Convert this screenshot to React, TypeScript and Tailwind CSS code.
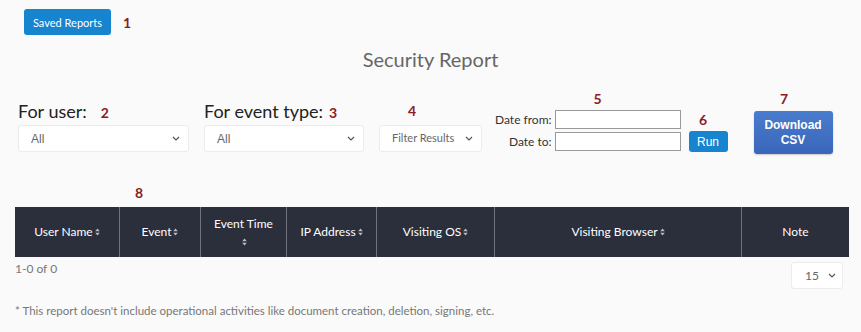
import React from 'react';

const Sort = () => (
  <svg width="5" height="8" viewBox="0 0 5 8" className="inline-block ml-[2px]">
    <path d="M2.5 0.5 L4.8 3.3 H0.2 Z" fill="#b9bcc4" />
    <path d="M2.5 7.5 L4.8 4.7 H0.2 Z" fill="#b9bcc4" />
  </svg>
);

const Chevron = () => (
  <svg width="8" height="5" viewBox="0 0 8 5" fill="none">
    <path d="M1 1 L4 4 L7 1" stroke="#555" strokeWidth="1.2" />
  </svg>
);

const Mark: React.FC<{ n: string; className?: string }> = ({ n, className }) => (
  <span className={`text-[14px] font-bold text-[#8a1c24] ${className ?? ''}`}>{n}</span>
);

const Select: React.FC<{ label: string; className?: string; lato?: boolean }> = ({ label, className, lato }) => (
  <div
    className={`h-[27px] bg-white border border-[#ececec] rounded-[3px] flex items-center justify-between pl-[12px] pr-[8px] text-[#666] ${
      lato ? "font-['Lato'] text-[11px]" : "font-['Liberation_Sans'] text-[12px]"
    } ${className ?? ''}`}
  >
    <span>{label}</span>
    <Chevron />
  </div>
);

const columns = [
  { name: 'User Name', w: 'w-[104px]', sort: true },
  { name: 'Event', w: 'w-[81px]', sort: true },
  { name: 'Event Time', w: 'w-[86px]', sort: true, wrap: true },
  { name: 'IP Address', w: 'w-[90px]', sort: true },
  { name: 'Visiting OS', w: 'w-[118px]', sort: true },
  { name: 'Visiting Browser', w: 'w-[247px]', sort: true },
  { name: 'Note', w: 'w-[108px]', sort: false },
];

export default function App() {
  return (
    <div className="w-[861px] h-[332px] overflow-hidden bg-[#fafafa] font-['Lato',sans-serif] text-[#333]">
      {/* Top */}
      <div className="pt-[9px] pl-[24px] flex items-center">
        <button className="w-[87px] h-[26px] rounded-[3px] bg-[#1784d0] text-white text-[11px] leading-none">
          Saved Reports
        </button>
        <Mark n="1" className="ml-[12px] mt-[1px]" />
      </div>

      <h1 className="mt-[12px] text-center text-[20px] leading-[24px] text-[#666]">Security Report</h1>

      {/* Filters */}
      <div className="mt-[17px] pl-[18px] flex items-end">
        <div className="w-[171px]">
          <div className="flex items-center h-[22px] mb-[3px]">
            <span className="text-[18px] text-[#222]">For user:</span>
            <Mark n="2" className="ml-[14px] mt-[2px]" />
          </div>
          <Select label="All" />
        </div>
        <div className="w-[160px] ml-[15px]">
          <div className="flex items-center h-[22px] mb-[3px]">
            <span className="text-[18px] text-[#222]">For event type:</span>
            <Mark n="3" className="ml-[6px] mt-[2px]" />
          </div>
          <Select label="All" />
        </div>
        <div className="w-[103px] ml-[15px] flex flex-col">
          <Mark n="4" className="mb-[4px] ml-[29px]" />
          <Select label="Filter Results" lato className="w-full" />
        </div>
        <div className="ml-[13px] flex flex-col items-end mb-[1px]">
          <Mark n="5" className="mr-[79px] mb-[3px] leading-[16px]" />
          <div className="flex flex-col gap-[3px]">
            {['Date from:', 'Date to:'].map((l) => (
              <div key={l} className="flex items-center justify-end">
                <span className="text-[12px] text-[#333] mr-[3px]">{l}</span>
                <div className="w-[126px] h-[19px] bg-white border border-[#9a9a9a]" />
              </div>
            ))}
          </div>
        </div>
        <div className="ml-[8px] flex flex-col items-center">
          <Mark n="6" className="mb-[1px] mr-[10px]" />
          <button className="w-[39px] h-[21px] rounded-[3px] bg-[#1784d0] text-white text-[12px] font-['Liberation_Sans']">
            Run
          </button>
        </div>
        <div className="ml-[26px] flex flex-col items-center">
          <Mark n="7" className="mb-[2px] mr-[18px]" />
          <button className="w-[79px] h-[43px] rounded-[3px] bg-gradient-to-b from-[#4a7ccd] to-[#3a66b9] text-white text-[12px] leading-[15px] font-bold font-['Liberation_Sans'] shadow-[0_1px_2px_rgba(0,0,0,0.2)] mb-[-2px]">
            Download
            <br />
            CSV
          </button>
        </div>
      </div>

      {/* Table */}
      <div className="mt-[30px] pl-[135px] h-[19px] leading-[19px]">
        <Mark n="8" />
      </div>
      <div className="mt-[6px] ml-[15px] w-[834px] flex h-[50px] bg-[#2b2e3b]">
        {columns.map((c, i) => (
          <div
            key={c.name}
            className={`${c.w} shrink-0 flex items-center justify-center text-center text-[12px] text-white ${
              i > 0 ? 'border-l border-[#70737c]' : ''
            }`}
          >
            {c.wrap ? (
              <div className="leading-[17px]">
                {c.name}
                <br />
                <Sort />
              </div>
            ) : (
              <span className="flex items-center">
                {c.name}
                {c.sort && <Sort />}
              </span>
            )}
          </div>
        ))}
      </div>
      <div className="mx-[15px] mt-[5px] flex justify-between items-start">
        <span className="text-[12px] text-[#777] mt-[-2px]">1-0 of 0</span>
        <div className="w-[52px] h-[27px] mr-[3px] bg-white border border-[#ececec] rounded-[3px] flex items-center justify-between pl-[13px] pr-[6px] text-[12px] text-[#666]">
          <span>15</span>
          <Chevron />
        </div>
      </div>

      <p className="mt-[13px] ml-[15px] text-[11.5px] text-[#777]">
        * This report doesn't include operational activities like document creation, deletion, signing, etc.
      </p>
    </div>
  );
}
